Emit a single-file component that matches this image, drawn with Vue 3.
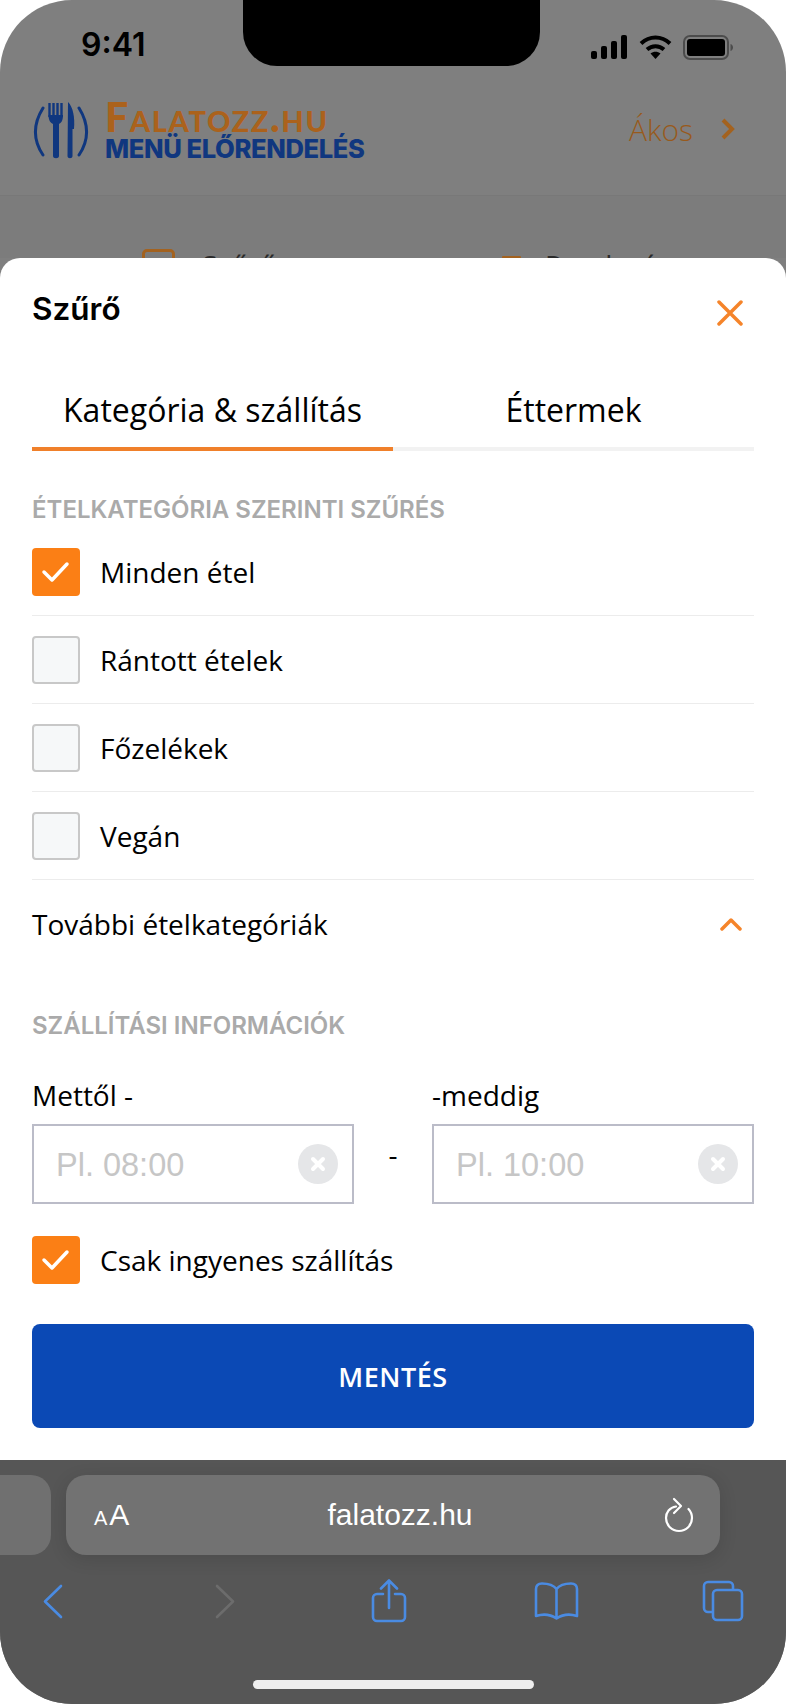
<script setup>
import { ref } from 'vue'

const tab = ref(0)
const categories = ref([
  { name: 'Minden étel', checked: true },
  { name: 'Rántott ételek', checked: false },
  { name: 'Főzelékek', checked: false },
  { name: 'Vegán', checked: false }
])
const freeOnly = ref(true)
const from = ref('')
const to = ref('')
</script>

<template>
  <div class="phone">
    <div class="notch"></div>

    <div class="status">
      <span class="time">9:41</span>
      <div class="status-icons">
        <svg width="37" height="24" viewBox="0 0 37 24" fill="#000">
          <rect x="0" y="16" width="6" height="8" rx="2" />
          <rect x="10" y="11" width="6" height="13" rx="2" />
          <rect x="20" y="6" width="6" height="18" rx="2" />
          <rect x="30" y="0" width="6" height="24" rx="2" />
        </svg>
        <svg width="33" height="24" viewBox="0 0 33 24" fill="none" stroke="#000" stroke-width="4">
          <path d="M2 8.500C10.500 .5 22.500 .5 31 8.500" />
          <path d="M8 14.500c5-4.400 12-4.400 17 0" />
          <path d="M16.500 24l-5-5.500c3-2.200 7-2.200 10 0z" fill="#000" stroke="none" />
        </svg>
        <svg width="50" height="25" viewBox="0 0 50 25">
          <rect x="1" y="1" width="44" height="23" rx="6" fill="none" stroke="#4c4c4c" stroke-width="2" />
          <rect x="4" y="4" width="38" height="17" rx="3" fill="#000" />
          <path d="M47.500 9c1.800.6 2.500 2 2.500 3.500s-.7 2.900-2.500 3.500z" fill="#4c4c4c" />
        </svg>
      </div>
    </div>

    <header class="site-header">
      <div class="logo">
        <svg width="58" height="58" viewBox="0 0 58 58" fill="none">
          <path d="M11 6C1 22 1 38 11 53" stroke="#10377f" stroke-width="3" stroke-linecap="round" />
          <path d="M47 6c10 16 10 32 0 47" stroke="#10377f" stroke-width="3" stroke-linecap="round" />
          <path d="M17.500 1v14M21.500 1v14M25.500 1v14M29.500 1v14" stroke="#10377f" stroke-width="2.400" />
          <path d="M16.500 13c0 6 2.500 8 4.500 9v32c0 3 6 3 6 0V22c2-1 4-3 4-9z" fill="#10377f" />
          <path d="M36 0c5 5 7 15 6 27h-1.500v27c0 3-5 3-5 0z" fill="#10377f" />
        </svg>
        <div class="logo-text">
          <div class="logo-name">Falatozz.hu</div>
          <div class="logo-sub">MENÜ ELŐRENDELÉS</div>
        </div>
      </div>
      <div class="user">
        <span>Ákos</span>
        <svg width="15" height="22" viewBox="0 0 15 22" fill="none" stroke="#a3621f" stroke-width="4">
          <path d="M3 2l9 9-9 9" />
        </svg>
      </div>
    </header>

    <div class="peek">
      <div class="peek-item first">
        <div class="peek-icon"></div>
        <span>Szűrő</span>
      </div>
      <div class="peek-item">
        <div class="peek-icon small"></div>
        <span>Rendezés</span>
      </div>
    </div>

    <section class="sheet">
      <div class="sheet-head">
        <h2>Szűrő</h2>
        <svg width="26" height="26" viewBox="0 0 26 26" fill="none" stroke="#f5842a" stroke-width="3.500" stroke-linecap="round">
          <path d="M2 2l22 22M24 2L2 24" />
        </svg>
      </div>

      <div class="tabs">
        <button class="tab" :class="{ active: tab === 0 }" @click="tab = 0">Kategória &amp; szállítás</button>
        <button class="tab" :class="{ active: tab === 1 }" @click="tab = 1">Éttermek</button>
      </div>

      <h3 class="section-label first-label">ÉTELKATEGÓRIA SZERINTI SZŰRÉS</h3>

      <div
        v-for="c in categories"
        :key="c.name"
        class="row"
        @click="c.checked = !c.checked"
      >
        <span class="box" :class="{ on: c.checked }">
          <svg v-if="c.checked" width="30" height="24" viewBox="0 0 30 24" fill="none" stroke="#fff" stroke-width="3.500" stroke-linecap="round" stroke-linejoin="round">
            <path d="M3 12l8 8L26 4" />
          </svg>
        </span>
        <span>{{ c.name }}</span>
      </div>

      <div class="more">
        <span>További ételkategóriák</span>
        <svg width="22" height="14" viewBox="0 0 22 14" fill="none" stroke="#f5842a" stroke-width="3.500" stroke-linecap="round" stroke-linejoin="round">
          <path d="M2 12l9-9 9 9" />
        </svg>
      </div>

      <h3 class="section-label">SZÁLLÍTÁSI INFORMÁCIÓK</h3>

      <div class="times">
        <div class="field">
          <label>Mettől -</label>
          <div class="input">
            <input v-model="from" placeholder="Pl. 08:00" />
            <span class="clear">
              <svg width="16" height="16" viewBox="0 0 16 16" stroke="#fff" stroke-width="4" stroke-linecap="round">
                <path d="M3 3l10 10M13 3L3 13" />
              </svg>
            </span>
          </div>
        </div>
        <div class="dash">-</div>
        <div class="field">
          <label>-meddig</label>
          <div class="input">
            <input v-model="to" placeholder="Pl. 10:00" />
            <span class="clear">
              <svg width="16" height="16" viewBox="0 0 16 16" stroke="#fff" stroke-width="4" stroke-linecap="round">
                <path d="M3 3l10 10M13 3L3 13" />
              </svg>
            </span>
          </div>
        </div>
      </div>

      <div class="row free" @click="freeOnly = !freeOnly">
        <span class="box" :class="{ on: freeOnly }">
          <svg v-if="freeOnly" width="30" height="24" viewBox="0 0 30 24" fill="none" stroke="#fff" stroke-width="3.500" stroke-linecap="round" stroke-linejoin="round">
            <path d="M3 12l8 8L26 4" />
          </svg>
        </span>
        <span>Csak ingyenes szállítás</span>
      </div>

      <button class="save">MENTÉS</button>
    </section>

    <footer class="browser">
      <div class="url-row">
        <div class="prev-pill"></div>
        <div class="url-pill">
          <span class="aa"><small>A</small>A</span>
          <span class="url">falatozz.hu</span>
          <svg width="30" height="36" viewBox="0 0 30 36" fill="none" stroke="#fff" stroke-width="2.200" stroke-linecap="round" stroke-linejoin="round">
            <path d="M12 9.500C5.500 10.500 2 15.500 2 21a13 13 0 0 0 26 0c0-3.500-1.200-6.500-3.500-9" />
            <path d="M10 2l7 7-7 7" />
          </svg>
        </div>
      </div>

      <div class="tools">
        <svg class="t-back" width="20" height="35" viewBox="0 0 20 35" fill="none" stroke="#4a8be2" stroke-width="2.600" stroke-linecap="round" stroke-linejoin="round">
          <path d="M18 2L2 17.500 18 33" />
        </svg>
        <svg class="t-fwd" width="20" height="35" viewBox="0 0 20 35" fill="none" stroke="#6c6c6c" stroke-width="2.600" stroke-linecap="round" stroke-linejoin="round">
          <path d="M2 2l16 15.500L2 33" />
        </svg>
        <svg class="t-share" width="36" height="44" viewBox="0 0 36 44" fill="none" stroke="#4a8be2" stroke-width="2.600" stroke-linecap="round" stroke-linejoin="round">
          <path d="M18 29V2M10 9.500L18 1.500l8 8" />
          <path d="M12 15H6a4 4 0 0 0-4 4v19a4 4 0 0 0 4 4h24a4 4 0 0 0 4-4V19a4 4 0 0 0-4-4h-6" />
        </svg>
        <svg class="t-book" width="45" height="38" viewBox="0 0 45 38" fill="none" stroke="#4a8be2" stroke-width="2.600" stroke-linecap="round" stroke-linejoin="round">
          <path d="M22.500 7C19 2.500 14 1.500 8 1.500 4 1.500 2 3.500 2 7v27c6-2 14-2 20.500 2.500C29 32 37 32 43 34V7c0-3.500-2-5.500-6-5.500-6 0-11 1-14.500 5.500zM22.500 7v28" />
        </svg>
        <svg class="t-tabs" width="42" height="42" viewBox="0 0 42 42" fill="none" stroke="#4a8be2" stroke-width="2.600" stroke-linejoin="round">
          <path d="M31 9V6a4 4 0 0 0-4-4H6a4 4 0 0 0-4 4v22a4 4 0 0 0 4 4h4" />
          <rect x="11" y="10" width="29" height="30" rx="4" />
        </svg>
      </div>

      <div class="home-bar"></div>
    </footer>
  </div>
</template>

<style scoped>
.phone {
  position: relative;
  width: 786px;
  height: 1704px;
  display: flex;
  flex-direction: column;
  overflow: hidden;
  border-radius: 72px;
  background: #7f7f7f;
  font-family: "Open Sans", sans-serif;
  color: #000;
}

.notch {
  position: absolute;
  top: 0;
  left: 243px;
  width: 297px;
  height: 66px;
  background: #000;
  border-radius: 0 0 34px 34px;
}

.status {
  height: 90px;
  flex: none;
  display: flex;
  justify-content: space-between;
  padding: 24px 53px 0 81px;
  box-sizing: border-box;
}

.time {
  font-family: Inter, sans-serif;
  font-weight: 600;
  font-size: 32px;
  line-height: 42px;
}

.status-icons {
  display: flex;
  align-items: flex-start;
  gap: 11px;
  padding-top: 11px;
}

.site-header {
  height: 106px;
  flex: none;
  display: flex;
  align-items: center;
  justify-content: space-between;
  padding: 0 51px 24px 32px;
  box-sizing: border-box;
  border-bottom: 1px solid #787878;
}

.logo {
  display: flex;
  align-items: center;
  gap: 15px;
}

.logo-name {
  font-family: Lato, sans-serif;
  font-weight: 900;
  font-variant: small-caps;
  font-size: 41px;
  line-height: 36px;
  letter-spacing: 1.600px;
  color: #ab621c;
}

.logo-sub {
  font-family: Inter, sans-serif;
  font-weight: 800;
  font-size: 25.600px;
  line-height: 28px;
  letter-spacing: -0.4px;
  color: #10377f;
}

.user {
  display: flex;
  align-items: center;
  gap: 27px;
  margin-bottom: 3px;
  font-weight: 300;
  font-size: 30px;
  color: #985a1c;
}

.peek {
  height: 62px;
  flex: none;
  overflow: hidden;
  display: flex;
  background: #7c7c7c;
}

.peek-item {
  display: flex;
  align-items: flex-start;
  padding-top: 53px;
  margin-left: 142px;
  gap: 27px;
  font-size: 28px;
  line-height: 32px;
  color: #2a2a2a;
}

.peek-item.first {
  width: 217px;
}

.peek-item + .peek-item {
  margin-left: 143px;
  gap: 24px;
}

.peek-icon {
  width: 33px;
  height: 20px;
  border: 3px solid #a3621f;
  border-radius: 5px;
  box-sizing: border-box;
}

.peek-icon.small {
  width: 19px;
  margin-top: 7px;
  border: 0;
  background: #a3621f;
  border-radius: 1px;
}

.sheet {
  flex: none;
  height: 1202px;
  box-sizing: border-box;
  background: #fff;
  border-radius: 20px 20px 0 0;
  padding: 0 32px;
}

.sheet-head {
  height: 86px;
  display: flex;
  justify-content: space-between;
  align-items: flex-start;
  padding-top: 31px;
  box-sizing: border-box;
}

.sheet-head h2 {
  margin: 0;
  font-family: Inter, sans-serif;
  font-weight: 600;
  font-size: 31.500px;
  line-height: 40px;
}

.sheet-head svg {
  margin: 11px 11px 0 0;
}

.tabs {
  display: grid;
  grid-template-columns: 1fr 1fr;
  margin-top: 40px;
  border-bottom: 4px solid #f2f2f2;
}

.tab {
  height: 51px;
  padding: 0 0 12px;
  margin-bottom: -4px;
  border: 0;
  border-bottom: 4px solid transparent;
  background: none;
  font-family: "Open Sans", sans-serif;
  font-size: 32px;
  line-height: 44px;
  color: #000;
  box-sizing: content-box;
}

.tab.active {
  border-bottom-color: #f0802a;
}

.section-label {
  margin: 0;
  font-family: Inter, sans-serif;
  font-weight: 600;
  font-size: 24px;
  line-height: 28px;
  color: #aaa;
}

.first-label {
  margin-top: 45px;
}

.row {
  height: 88px;
  display: flex;
  align-items: center;
  gap: 20px;
  font-size: 28px;
  box-sizing: border-box;
  border-bottom: 1px solid #ececec;
}

.first-label + .row {
  margin-top: 4px;
}

.box {
  width: 48px;
  height: 48px;
  flex: none;
  display: flex;
  align-items: center;
  justify-content: center;
  box-sizing: border-box;
  border: 2px solid #c8c8c8;
  border-radius: 4px;
  background: #f6f8f9;
}

.box.on {
  border: 0;
  background: #fb7f15;
}

.more {
  height: 88px;
  display: flex;
  align-items: center;
  justify-content: space-between;
  padding-right: 12px;
  font-size: 28px;
}

.more + .section-label {
  margin-top: 44px;
}

.times {
  display: grid;
  grid-template-columns: 322px 78px 322px;
  margin-top: 36px;
}

.field label {
  display: block;
  font-size: 28px;
  line-height: 38px;
  margin-bottom: 10px;
}

.input {
  height: 80px;
  display: flex;
  align-items: center;
  box-sizing: border-box;
  border: 2px solid #bbbcc8;
  padding: 0 14px 0 22px;
}

.input input {
  flex: 1;
  min-width: 0;
  border: 0;
  outline: 0;
  padding: 2px 0 0;
  background: none;
  font-family: "Liberation Sans", sans-serif;
  font-size: 32.500px;
}

.input input::placeholder {
  color: #c6c6c6;
}

.clear {
  width: 40px;
  height: 40px;
  flex: none;
  border-radius: 50%;
  background: #e5e6e8;
  display: flex;
  align-items: center;
  justify-content: center;
}

.dash {
  text-align: center;
  font-size: 28px;
  padding-top: 59px;
  line-height: 38px;
}

.free {
  border-bottom: 0;
  margin-top: 12px;
}

.save {
  display: block;
  width: 100%;
  height: 104px;
  margin-top: 20px;
  border: 0;
  border-radius: 8px;
  background: #0b49b5;
  color: #fff;
  font-family: "Open Sans", sans-serif;
  font-weight: 600;
  font-size: 27px;
  letter-spacing: 0.5px;
}

.browser {
  flex: 1;
  background: #565656;
  padding-top: 15px;
  position: relative;
}

.url-row {
  display: flex;
  gap: 15px;
  height: 80px;
}

.prev-pill {
  width: 51px;
  background: #707070;
  border-radius: 0 20px 20px 0;
}

.url-pill {
  width: 654px;
  background: #727272;
  border-radius: 20px;
  display: flex;
  align-items: center;
  justify-content: space-between;
  padding: 0 26px 0 28px;
  box-sizing: border-box;
  box-shadow: 0 4px 18px rgba(0, 0, 0, 0.12);
  color: #fff;
}

.aa {
  font-family: "Liberation Sans", sans-serif;
  font-size: 30px;
  width: 60px;
}

.aa small {
  font-size: 20px;
  margin-right: 2px;
}

.url {
  font-family: "Liberation Sans", sans-serif;
  font-size: 30px;
  margin-right: 18px;
}

.tools {
  display: flex;
  align-items: center;
  height: 48px;
  margin-top: 22px;
  padding-left: 43px;
}

.t-fwd { margin-left: 152px; }
.t-share { margin-left: 136px; }
.t-book { margin-left: 127px; }
.t-tabs { margin-left: 123px; }

.home-bar {
  position: absolute;
  left: 253px;
  bottom: 15px;
  width: 281px;
  height: 9px;
  border-radius: 5px;
  background: #eee;
}
</style>

<style>
body {
  background: #fff;
}
</style>
